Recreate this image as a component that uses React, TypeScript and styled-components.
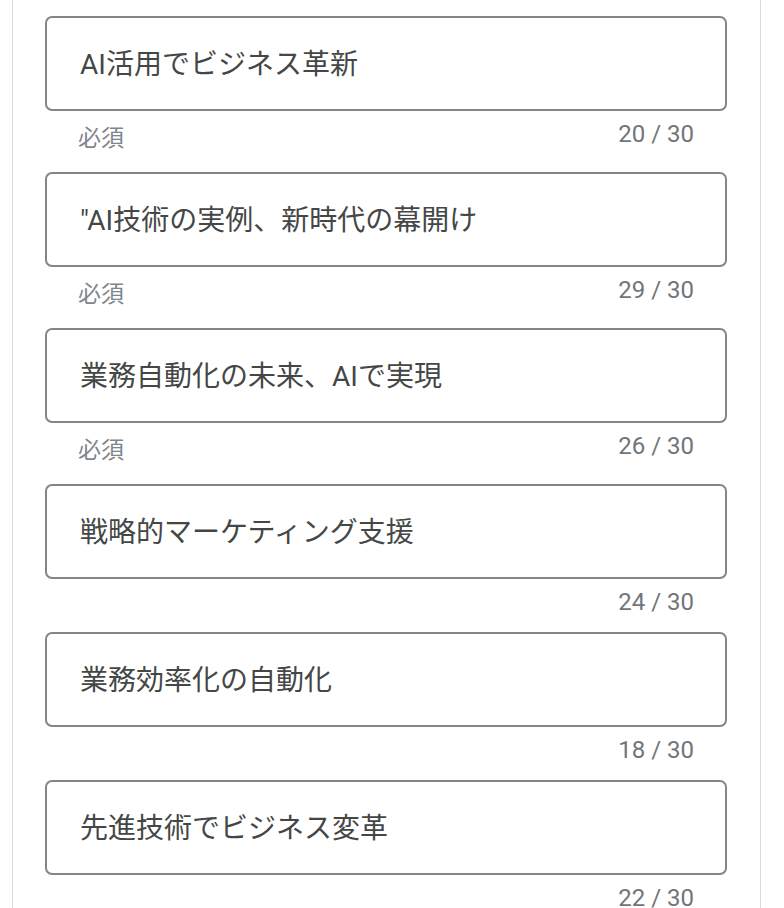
import React from 'react'
import styled, { createGlobalStyle } from 'styled-components'

interface Item {
  text: string
  required: boolean
}

const items: Item[] = [
  { text: 'AI活用でビジネス革新', required: true },
  { text: '"AI技術の実例、新時代の幕開け', required: true },
  { text: '業務自動化の未来、AIで実現', required: true },
  { text: '戦略的マーケティング支援', required: false },
  { text: '業務効率化の自動化', required: false },
  { text: '先進技術でビジネス変革', required: false },
]

const counts = [20, 29, 26, 24, 18, 22]

const GlobalStyle = createGlobalStyle`
  html, body {
    margin: 0;
    padding: 0;
    background: #ffffff;
    font-family: Roboto, "Noto Sans CJK JP", sans-serif;
    overflow: hidden;
  }
`

function App() {
  return (
    <>
      <GlobalStyle />
      <Panel>
        {items.map((item, i) => (
          <Field key={i}>
            <InputBox>
              <InputText>{item.text}</InputText>
            </InputBox>
            <HelperRow>
              {item.required ? <Label>必須</Label> : <span />}
              <Counter>{counts[i]} / 30</Counter>
            </HelperRow>
          </Field>
        ))}
      </Panel>
    </>
  )
}

const Panel = styled.div`
  margin-left: 12px;
  width: 749px;
  min-height: 100vh;
  box-sizing: border-box;
  border-left: 1px solid #dadce0;
  border-right: 1px solid #dadce0;
  padding: 16px 33px 0 32px;
  display: flex;
  flex-direction: column;
`

const Field = styled.div`
  display: flex;
  flex-direction: column;
  margin-bottom: 16px;
`

const InputBox = styled.div`
  height: 95px;
  box-sizing: border-box;
  border: 2px solid #80868b;
  border-radius: 7px;
  padding: 3px 33px 0 33px;
  display: flex;
  align-items: center;
`

const InputText = styled.span`
  font-size: 28px;
  line-height: 36px;
  color: #444746;
  white-space: nowrap;
`

const HelperRow = styled.div`
  display: flex;
  justify-content: space-between;
  align-items: flex-start;
  padding: 9px 33px 0 33px;
`

const Label = styled.span`
  font-size: 23px;
  line-height: 28px;
  margin: 5px 0 3px;
  color: #80868b;
`

const Counter = styled.span`
  font-size: 24px;
  line-height: 28px;
  color: #70757a;
`

export default App
